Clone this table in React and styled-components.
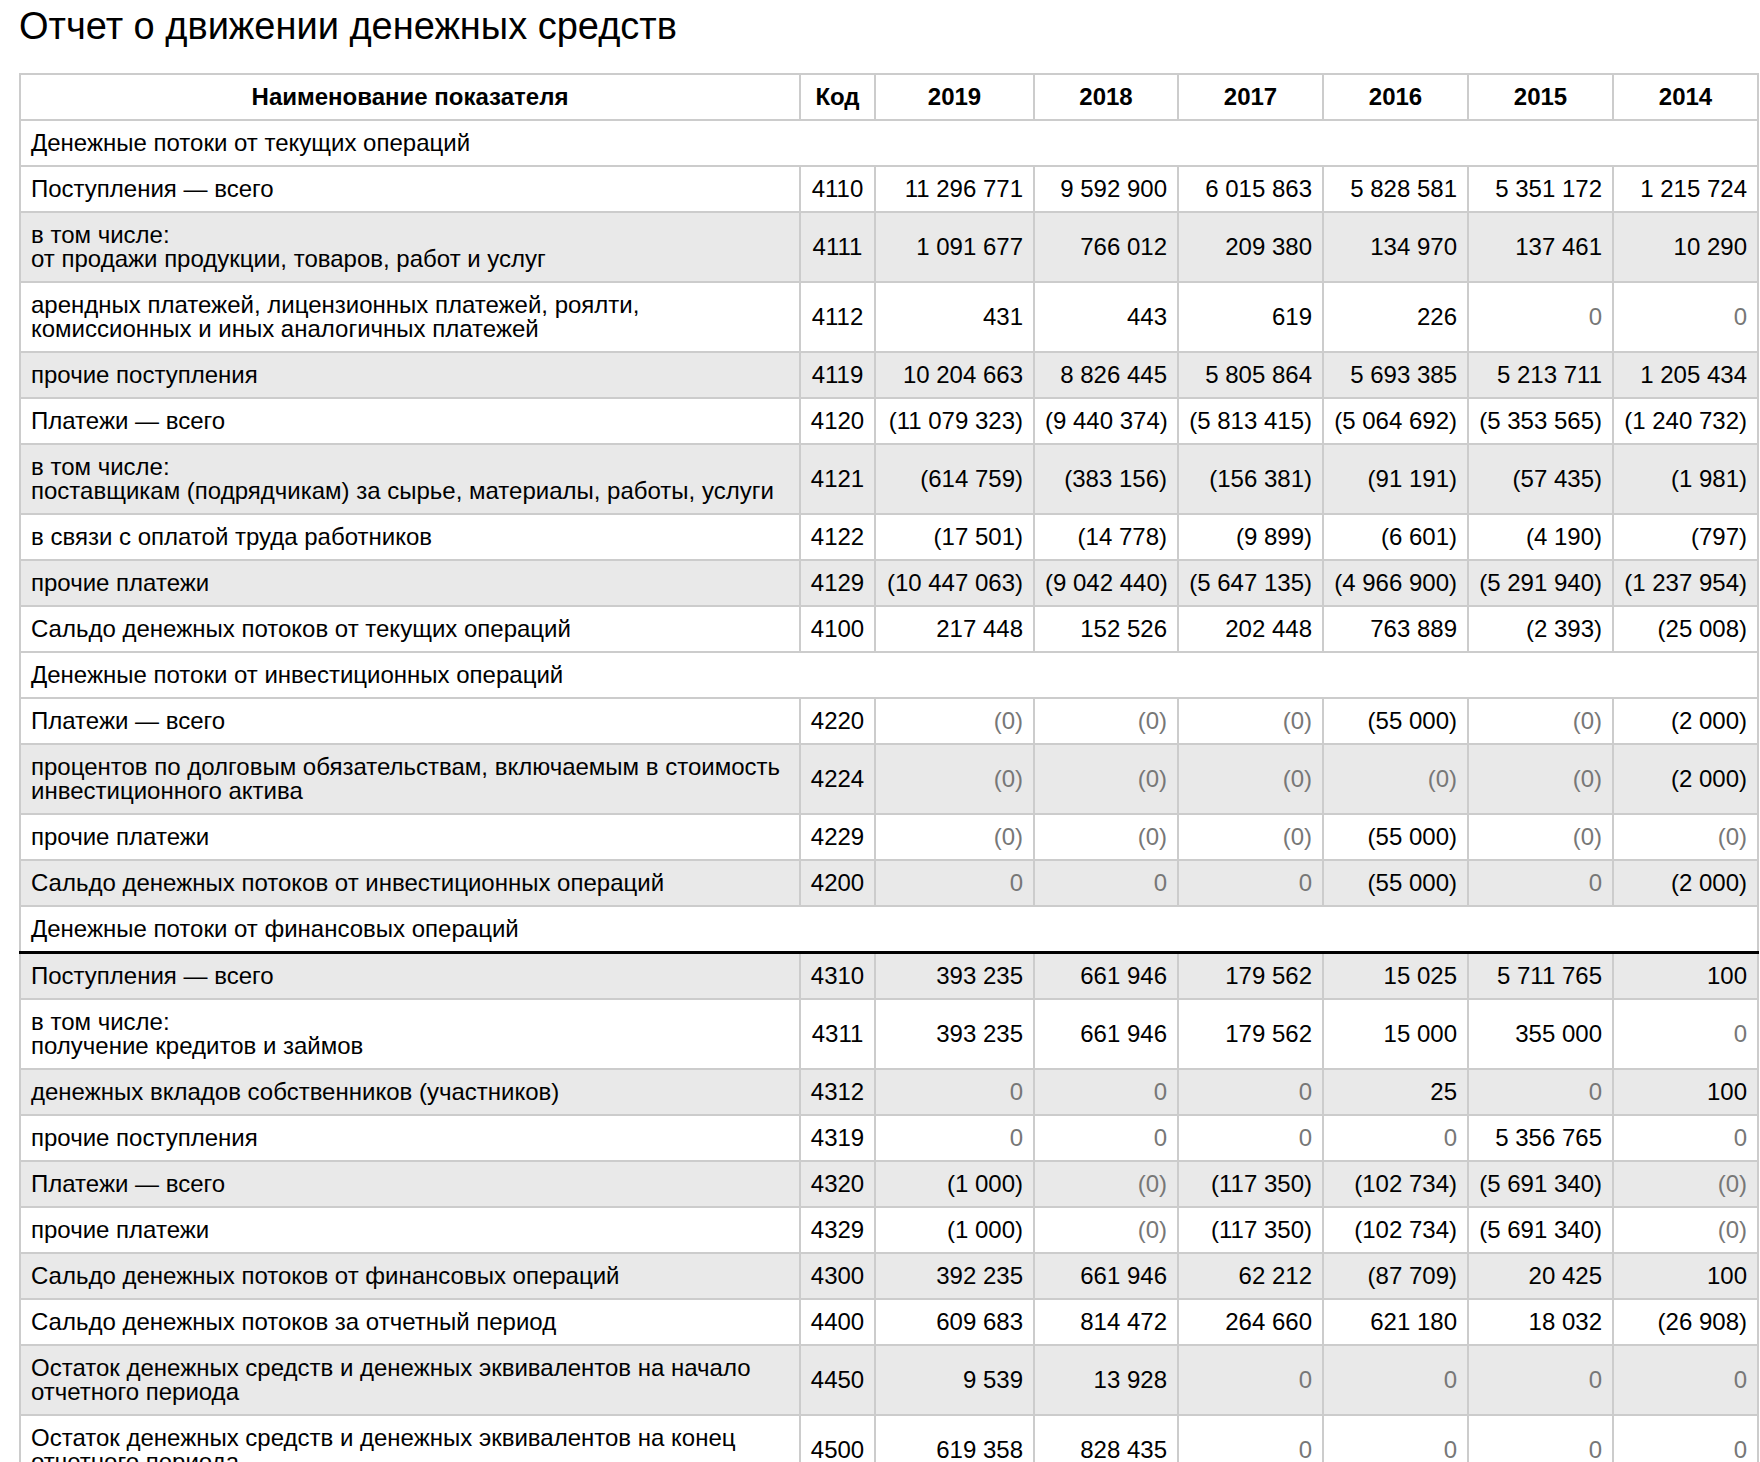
import styled, { createGlobalStyle } from "styled-components";

const GlobalStyle = createGlobalStyle`
  body {
    margin: 0;
    background: #fff;
    color: #000;
    font-family: "Liberation Sans", Arial, Helvetica, sans-serif;
  }
`;

const Page = styled.div`
  padding: 4px 0 0 19px;
`;

const Title = styled.h1`
  margin: 0 0 25px 0;
  font-size: 38px;
  font-weight: 400;
  line-height: 44px;
`;

const Table = styled.table`
  width: 1740px;
  table-layout: fixed;
  border-collapse: collapse;
  border: 2px solid #ccc;
  font-size: 24px;
  line-height: 24px;
`;

const Col = styled.col`
  width: ${({ $width }) => $width}px;
`;

const HeadCell = styled.th`
  padding: 10px 10px;
  border: 2px solid #ccc;
  font-weight: 700;
  text-align: center;
  white-space: nowrap;
`;

const Row = styled.tr`
  background: ${({ $shaded }) => ($shaded ? "#e9e9e9" : "#fff")};
`;

const SectionCell = styled.td`
  padding: 10px 10px;
  border: 2px solid #ccc;
  border-bottom: ${({ $strong }) => ($strong ? "3px solid #000" : "2px solid #ccc")};
  background: #fff;
`;

const NameCell = styled.td`
  padding: 10px 10px;
  border: 2px solid #ccc;
  text-align: left;
  vertical-align: middle;
`;

const CodeCell = styled.td`
  padding: 10px 4px;
  border: 2px solid #ccc;
  text-align: center;
  vertical-align: middle;
`;

const Value = styled.td`
  padding: 10px 10px;
  border: 2px solid #ccc;
  text-align: right;
  vertical-align: middle;
  white-space: nowrap;
  color: ${({ $muted }) => ($muted ? "#777" : "#000")};
`;

const columns = [780, 75, 159, 144, 145, 145, 145, 145];
const years = ["2019", "2018", "2017", "2016", "2015", "2014"];

// name can be a string or a list of lines
const rows = [
  { section: "Денежные потоки от текущих операций" },
  ["Поступления — всего", "4110", "11 296 771", "9 592 900", "6 015 863", "5 828 581", "5 351 172", "1 215 724"],
  [["в том числе:", "от продажи продукции, товаров, работ и услуг"], "4111", "1 091 677", "766 012", "209 380", "134 970", "137 461", "10 290"],
  [["арендных платежей, лицензионных платежей, роялти,", "комиссионных и иных аналогичных платежей"], "4112", "431", "443", "619", "226", "0", "0"],
  ["прочие поступления", "4119", "10 204 663", "8 826 445", "5 805 864", "5 693 385", "5 213 711", "1 205 434"],
  ["Платежи — всего", "4120", "(11 079 323)", "(9 440 374)", "(5 813 415)", "(5 064 692)", "(5 353 565)", "(1 240 732)"],
  [["в том числе:", "поставщикам (подрядчикам) за сырье, материалы, работы, услуги"], "4121", "(614 759)", "(383 156)", "(156 381)", "(91 191)", "(57 435)", "(1 981)"],
  ["в связи с оплатой труда работников", "4122", "(17 501)", "(14 778)", "(9 899)", "(6 601)", "(4 190)", "(797)"],
  ["прочие платежи", "4129", "(10 447 063)", "(9 042 440)", "(5 647 135)", "(4 966 900)", "(5 291 940)", "(1 237 954)"],
  ["Сальдо денежных потоков от текущих операций", "4100", "217 448", "152 526", "202 448", "763 889", "(2 393)", "(25 008)"],
  { section: "Денежные потоки от инвестиционных операций" },
  ["Платежи — всего", "4220", "(0)", "(0)", "(0)", "(55 000)", "(0)", "(2 000)"],
  [["процентов по долговым обязательствам, включаемым в стоимость", "инвестиционного актива"], "4224", "(0)", "(0)", "(0)", "(0)", "(0)", "(2 000)"],
  ["прочие платежи", "4229", "(0)", "(0)", "(0)", "(55 000)", "(0)", "(0)"],
  ["Сальдо денежных потоков от инвестиционных операций", "4200", "0", "0", "0", "(55 000)", "0", "(2 000)"],
  { section: "Денежные потоки от финансовых операций", strong: true },
  ["Поступления — всего", "4310", "393 235", "661 946", "179 562", "15 025", "5 711 765", "100"],
  [["в том числе:", "получение кредитов и займов"], "4311", "393 235", "661 946", "179 562", "15 000", "355 000", "0"],
  ["денежных вкладов собственников (участников)", "4312", "0", "0", "0", "25", "0", "100"],
  ["прочие поступления", "4319", "0", "0", "0", "0", "5 356 765", "0"],
  ["Платежи — всего", "4320", "(1 000)", "(0)", "(117 350)", "(102 734)", "(5 691 340)", "(0)"],
  ["прочие платежи", "4329", "(1 000)", "(0)", "(117 350)", "(102 734)", "(5 691 340)", "(0)"],
  ["Сальдо денежных потоков от финансовых операций", "4300", "392 235", "661 946", "62 212", "(87 709)", "20 425", "100"],
  ["Сальдо денежных потоков за отчетный период", "4400", "609 683", "814 472", "264 660", "621 180", "18 032", "(26 908)"],
  [["Остаток денежных средств и денежных эквивалентов на начало", "отчетного периода"], "4450", "9 539", "13 928", "0", "0", "0", "0"],
  [["Остаток денежных средств и денежных эквивалентов на конец", "отчетного периода"], "4500", "619 358", "828 435", "0", "0", "0", "0"],
];

const isZero = (v) => v === "0" || v === "(0)";

const Name = ({ value }) =>
  Array.isArray(value)
    ? value.map((line, i) => (
        <span key={i}>
          {i > 0 && <br />}
          {line}
        </span>
      ))
    : value;

const App = () => (
  <Page>
    <GlobalStyle />
    <Title>Отчет о движении денежных средств</Title>
    <Table>
      <colgroup>
        {columns.map((w, i) => (
          <Col key={i} $width={w} />
        ))}
      </colgroup>
      <thead>
        <tr>
          <HeadCell>Наименование показателя</HeadCell>
          <HeadCell>Код</HeadCell>
          {years.map((y) => (
            <HeadCell key={y}>{y}</HeadCell>
          ))}
        </tr>
      </thead>
      <tbody>
        {rows.map((row, i) => {
          if (row.section) {
            return (
              <tr key={i}>
                <SectionCell colSpan={8} $strong={row.strong}>
                  {row.section}
                </SectionCell>
              </tr>
            );
          }
          const [name, code, ...values] = row;
          return (
            <Row key={i} $shaded={i % 2 === 0}>
              <NameCell>
                <Name value={name} />
              </NameCell>
              <CodeCell>{code}</CodeCell>
              {values.map((v, j) => (
                <Value key={j} $muted={isZero(v)}>
                  {v.replace(/ /g, "\u00a0")}
                </Value>
              ))}
            </Row>
          );
        })}
      </tbody>
    </Table>
  </Page>
);

export default App;
